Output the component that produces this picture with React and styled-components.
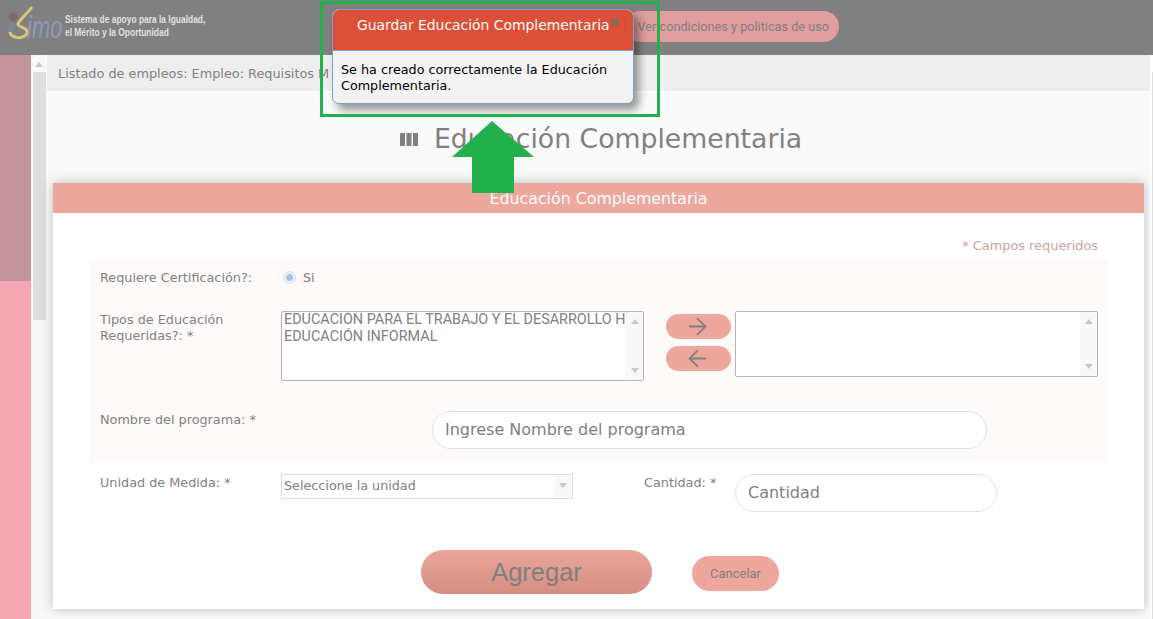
import styled, { createGlobalStyle } from "styled-components";
import { ArrowLeft, ArrowRight } from "lucide-react";

const GlobalStyle = createGlobalStyle`
  html, body {
    margin: 0;
    padding: 0;
    background: #fff;
    overflow: hidden;
  }
  * {
    box-sizing: border-box;
  }
`;

const BODY_FONT = `"DejaVu Sans", Verdana, sans-serif`;
const NARROW_FONT = `Roboto, "Liberation Sans", sans-serif`;

const App = () => {
  return (
    <Page>
      <GlobalStyle />
      <Header>
        <LogoBox>
          <Logo />
          <Tagline>
            <span>Sistema de apoyo para la Igualdad,</span>
            <span>el Mérito y la Oportunidad</span>
          </Tagline>
        </LogoBox>
        <TermsLink>Ver condiciones y politicas de uso</TermsLink>
      </Header>

      <Body>
        <Sidebar>
          <SidebarTop />
          <SidebarBottom />
        </Sidebar>
        <ScrollTrack>
          <ScrollArrow />
          <ScrollThumb />
        </ScrollTrack>

        <Main>
          <Breadcrumb>Listado de empleos: Empleo: Requisitos M</Breadcrumb>
          <TitleRow>
            <BarsIcon />
            <PageTitle>Educación Complementaria</PageTitle>
          </TitleRow>

          <Card>
            <CardHeader>Educación Complementaria</CardHeader>
            <RequiredNote>* Campos requeridos</RequiredNote>

            <ShadedPanel>
              <RadioRow>
                <FieldLabel>Requiere Certificación?:</FieldLabel>
                <Radio />
                <RadioText>Si</RadioText>
              </RadioRow>

              <TransferRow>
                <FieldLabel>
                  Tipos de Educación
                  <br />
                  Requeridas?: *
                </FieldLabel>
                <ListBox $width={363} $height={70}>
                  <ListItems>
                    <ListItem>EDUCACIÓN PARA EL TRABAJO Y EL DESARROLLO H</ListItem>
                    <ListItem>EDUCACIÓN INFORMAL</ListItem>
                  </ListItems>
                  <ListScroll>
                    <ScrollArrow $light />
                    <ScrollArrow $light $down />
                  </ListScroll>
                </ListBox>
                <MoveButtons>
                  <MoveButton>
                    <ArrowRight size={27} strokeWidth={1.6} />
                  </MoveButton>
                  <MoveButton>
                    <ArrowLeft size={27} strokeWidth={1.6} />
                  </MoveButton>
                </MoveButtons>
                <ListBox $width={363} $height={66}>
                  <ListItems />
                  <ListScroll>
                    <ScrollArrow $light />
                    <ScrollArrow $light $down />
                  </ListScroll>
                </ListBox>
              </TransferRow>

              <ProgramRow>
                <FieldLabel>Nombre del programa: *</FieldLabel>
                <PillInput $width={555} placeholder="Ingrese Nombre del programa" />
              </ProgramRow>
            </ShadedPanel>

            <UnitRow>
              <FieldLabel>Unidad de Medida: *</FieldLabel>
              <SelectBox>
                <span>Seleccione la unidad</span>
                <SelectArrow>
                  <ScrollArrow $light $down />
                </SelectArrow>
              </SelectBox>
              <QuantityLabel>Cantidad: *</QuantityLabel>
              <PillInput $width={262} placeholder="Cantidad" />
            </UnitRow>

            <Actions>
              <AddButton>Agregar</AddButton>
              <CancelButton>Cancelar</CancelButton>
            </Actions>
          </Card>
        </Main>

        <PageEdge>
          <PageEdgeThumb />
        </PageEdge>
      </Body>

      <Dialog>
        <DialogHeader>
          <DialogTitle>Guardar Educación Complementaria</DialogTitle>
          <DialogClose>
            <svg width="10" height="10" viewBox="0 0 10 10">
              <path d="M1.5 1.5 L8.5 8.5 M8.5 1.5 L1.5 8.5" stroke="#7a6a68" strokeWidth="2.8" />
            </svg>
          </DialogClose>
          <DialogDivider />
        </DialogHeader>
        <DialogBody>Se ha creado correctamente la Educación Complementaria.</DialogBody>
      </Dialog>

      <Highlight />
      <HighlightArrow width="82" height="72" viewBox="0 0 82 72">
        <path d="M40 0 L82 36 L62 36 L62 72 L20 72 L20 36 L0 36 Z" fill="#22b14c" />
      </HighlightArrow>
    </Page>
  );
};

const Logo = () => (
  <LogoSvg width="58" height="42" viewBox="0 0 58 42">
    <circle cx="6" cy="12" r="4.5" fill="#7d6a68" />
    <path d="M4 17 C1 20 0 25 2 29 C4 26 7 24 10 22 C8 20 6 18 4 17 Z" fill="#7f8596" />
    <LogoText transform="translate(20 33) scale(1 1.45)">imo</LogoText>
    <path
      d="M25 2 C20 9 13 14 11 19 C10 22 19 22 20 26 C21 31 13 34 8 32 C5 31 3 29 3 27"
      stroke="#d9c777"
      strokeWidth="3"
      fill="none"
    />
  </LogoSvg>
);

const BarsIcon = () => (
  <BarsSvg width="18" height="13" viewBox="0 0 18 13">
    <rect x="0" width="5" height="13" fill="#808080" />
    <rect x="6.5" width="5" height="13" fill="#808080" />
    <rect x="13" width="5" height="13" fill="#808080" />
  </BarsSvg>
);

const Page = styled.div`
  position: relative;
  display: flex;
  flex-direction: column;
  width: 1153px;
  height: 619px;
  overflow: hidden;
  font-family: ${BODY_FONT};
  color: #808080;
`;

const Header = styled.header`
  display: flex;
  align-items: flex-start;
  flex: 0 0 55px;
  background: #808080;
`;

const LogoBox = styled.div`
  display: flex;
  align-items: center;
  width: 625px;
  padding: 5px 0 0 7px;
`;

const LogoSvg = styled.svg`
  flex: none;
`;

const LogoText = styled.text`
  font-family: "Liberation Sans", sans-serif;
  font-style: italic;
  font-size: 22px;
  fill: #8a9abc;
`;

const Tagline = styled.div`
  display: flex;
  flex-direction: column;
  width: 180px;
  font-family: "Liberation Sans", sans-serif;
  font-size: 11px;
  font-weight: 700;
  line-height: 13px;
  color: #e2e2e2;
  transform: scaleX(0.765);
  transform-origin: left center;
  white-space: nowrap;
`;

const TermsLink = styled.a`
  display: flex;
  align-items: center;
  justify-content: flex-end;
  width: 214px;
  height: 31px;
  margin-top: 11px;
  padding-right: 10px;
  border-radius: 16px;
  background: #e09e9e;
  font-family: ${NARROW_FONT};
  font-size: 12.7px;
  color: #808080;
  white-space: nowrap;
`;

const Body = styled.div`
  display: flex;
  flex: 1;
  min-height: 0;
`;

const Sidebar = styled.aside`
  display: flex;
  flex-direction: column;
  flex: 0 0 31px;
`;

const SidebarTop = styled.div`
  flex: 0 0 226px;
  background: #c3949c;
`;

const SidebarBottom = styled.div`
  flex: 1;
  background: #f5a8b4;
`;

const ScrollTrack = styled.div`
  display: flex;
  flex-direction: column;
  align-items: center;
  flex: 0 0 16px;
  padding-top: 7px;
  background: #f8f8f8;
`;

const ScrollArrow = styled.span`
  display: block;
  width: 0;
  height: 0;
  border-left: 4px solid transparent;
  border-right: 4px solid transparent;
  border-top: ${(props) => (props.$down ? "5px solid #c9c9c9" : "none")};
  border-bottom: ${(props) => (props.$down ? "none" : "5px solid #c9c9c9")};
`;

const ScrollThumb = styled.div`
  width: 13px;
  height: 248px;
  margin-top: 5px;
  background: #dedede;
`;

const Main = styled.main`
  display: flex;
  flex-direction: column;
  flex: 1;
  min-width: 0;
  background: #fafafa;
`;

const Breadcrumb = styled.div`
  flex: 0 0 36px;
  padding: 11px 0 0 11px;
  background: #eeeeee;
  font-size: 12.85px;
  line-height: 16px;
  white-space: nowrap;
  box-shadow: 0 2px 0 #fff;
`;

const TitleRow = styled.div`
  display: flex;
  align-items: center;
  flex: 0 0 92px;
  padding: 4px 0 0 353px;
`;

const BarsSvg = styled.svg`
  flex: none;
`;

const PageTitle = styled.h1`
  margin: 0 0 0 16px;
  font-size: 26.7px;
  font-weight: 400;
  line-height: 32px;
  white-space: nowrap;
`;

const Card = styled.section`
  display: flex;
  flex-direction: column;
  flex: 0 0 426px;
  margin: 0 6px;
  background: #fff;
  box-shadow: 0 0 12px rgba(0, 0, 0, 0.25);
`;

const CardHeader = styled.div`
  flex: 0 0 30px;
  min-height: 0;
  background: #eea79c;
  color: #fff;
  font-size: 15.8px;
  line-height: 31px;
  text-align: center;
`;

const RequiredNote = styled.div`
  height: 46px;
  padding: 25px 46px 0 0;
  color: #c9a49c;
  font-size: 12.9px;
  line-height: 16px;
  text-align: right;
`;

const ShadedPanel = styled.div`
  display: flex;
  flex-direction: column;
  height: 204px;
  margin: 0 36px;
  padding-left: 10px;
  background: #fffafa;
`;

const FieldLabel = styled.label`
  flex: 0 0 182px;
  padding: 1px 0 0 1px;
  font-size: 12.8px;
  line-height: 16px;
`;

const RadioRow = styled.div`
  display: flex;
  align-items: center;
  height: 52px;
  padding-top: 2px;
  padding-bottom: 17px;
`;

const Radio = styled.span`
  display: block;
  width: 13px;
  height: 13px;
  margin-left: 2px;
  border: 1px solid #d8dee6;
  border-radius: 50%;
  background: radial-gradient(circle, #a9c2dd 0 3px, #eef2f6 4px);
`;

const RadioText = styled.span`
  margin-left: 7px;
  font-size: 12.8px;
`;

const TransferRow = styled.div`
  display: flex;
  align-items: flex-start;
  height: 100px;
`;

const ListBox = styled.div`
  display: flex;
  flex: none;
  width: ${(props) => props.$width}px;
  height: ${(props) => props.$height}px;
  border: 1px solid #b4b4b4;
  border-radius: 2px;
  background: #fff;
  overflow: hidden;
`;

const ListItems = styled.div`
  flex: 1;
  min-width: 0;
  margin-top: -1px;
  padding: 0 0 0 2px;
  overflow: hidden;
  font-family: ${NARROW_FONT};
  font-size: 14.4px;
`;

const ListItem = styled.div`
  height: 17px;
  line-height: 17px;
  white-space: nowrap;
  overflow: hidden;
`;

const ListScroll = styled.div`
  display: flex;
  flex-direction: column;
  align-items: center;
  justify-content: space-between;
  flex: 0 0 17px;
  padding: 7px 0;
  background: #f8f8f8;
`;

const MoveButtons = styled.div`
  display: flex;
  flex-direction: column;
  gap: 7px;
  margin: 3px 4px 0 22px;
`;

const MoveButton = styled.button`
  display: flex;
  align-items: center;
  justify-content: center;
  width: 65px;
  height: 25px;
  padding: 0 3px 0 0;
  border: 0;
  border-radius: 13px;
  background: #eea79c;
  color: #808080;
`;

const ProgramRow = styled.div`
  display: flex;
  align-items: flex-start;
`;

const PillInput = styled.input`
  display: block;
  flex: none;
  width: ${(props) => props.$width}px;
  height: 38px;
  padding: 0 12px 2px;
  border: 1px solid #e0e0ea;
  border-radius: 19px;
  background: #fff;
  font-family: ${BODY_FONT};
  font-size: 16px;
  outline: none;

  &::placeholder {
    color: #808080;
    opacity: 1;
  }

  ${ProgramRow} & {
    margin-left: 151px;
  }
`;

const UnitRow = styled.div`
  display: flex;
  align-items: flex-start;
  height: 76px;
  margin-top: 11px;
  padding-left: 46px;
`;

const SelectBox = styled.div`
  display: flex;
  align-items: center;
  justify-content: space-between;
  flex: none;
  width: 292px;
  height: 25px;
  padding: 0 1px 0 2px;
  border: 1px solid #dcdde6;
  font-size: 12.75px;

  span:first-child {
    margin-top: -2px;
  }
`;

const SelectArrow = styled.span`
  display: flex;
  align-items: center;
  justify-content: center;
  width: 16px;
  height: 21px;
  background: #f8f8f8;
`;

const QuantityLabel = styled(FieldLabel)`
  flex: 0 0 91px;
  margin-left: 71px;
  padding-left: 0;
`;

const Actions = styled.div`
  display: flex;
  align-items: center;
  height: 44px;
  padding-left: 368px;
`;

const AddButton = styled.button`
  width: 231px;
  height: 44px;
  padding: 0;
  border: 0;
  border-radius: 22px;
  background: linear-gradient(#eca599, #d58e84);
  color: #808080;
  font-family: "Liberation Sans", sans-serif;
  font-size: 25.5px;
`;

const CancelButton = styled.button`
  width: 87px;
  height: 35px;
  margin: 2px 0 0 40px;
  padding: 0;
  border: 0;
  border-radius: 18px;
  background: #eea79c;
  color: #808080;
  font-family: ${NARROW_FONT};
  font-size: 13px;
`;

const PageEdge = styled.div`
  flex: 0 0 3px;
  padding: 17px 0 0 2px;
  background: #fff;
`;

const PageEdgeThumb = styled.div`
  width: 1px;
  height: 100%;
  background: #dedede;
`;

const Dialog = styled.div`
  position: absolute;
  top: 9px;
  left: 332px;
  width: 302px;
  height: 95px;
  border: 1px solid #7f9fc4;
  border-radius: 7px;
  background: #f3f3f3;
  box-shadow: 5px 6px 9px rgba(0, 0, 0, 0.4);
  overflow: hidden;
`;

const DialogHeader = styled.div`
  display: flex;
  align-items: flex-start;
  height: 41px;
  padding: 5px 0 0 24px;
  border-bottom: 1px solid #7f9fc4;
  background: #dd5038;
`;

const DialogTitle = styled.span`
  color: #fff;
  font-size: 13.9px;
  line-height: 20px;
  white-space: nowrap;
`;

const DialogClose = styled.span`
  display: block;
  height: 10px;
  margin: 2px 0 0 0;
  line-height: 0;
`;

const DialogDivider = styled.span`
  display: block;
  width: 1px;
  height: 12px;
  margin: 3px 0 0 5px;
  background: rgba(0, 0, 0, 0.12);
`;

const DialogBody = styled.div`
  padding: 11px 8px 0;
  color: #000;
  font-size: 12.75px;
  line-height: 16px;
`;

const Highlight = styled.div`
  position: absolute;
  top: 1px;
  left: 320px;
  width: 340px;
  height: 116px;
  border: 3px solid #22b14c;
`;

const HighlightArrow = styled.svg`
  position: absolute;
  top: 121px;
  left: 452px;
`;

export default App;
